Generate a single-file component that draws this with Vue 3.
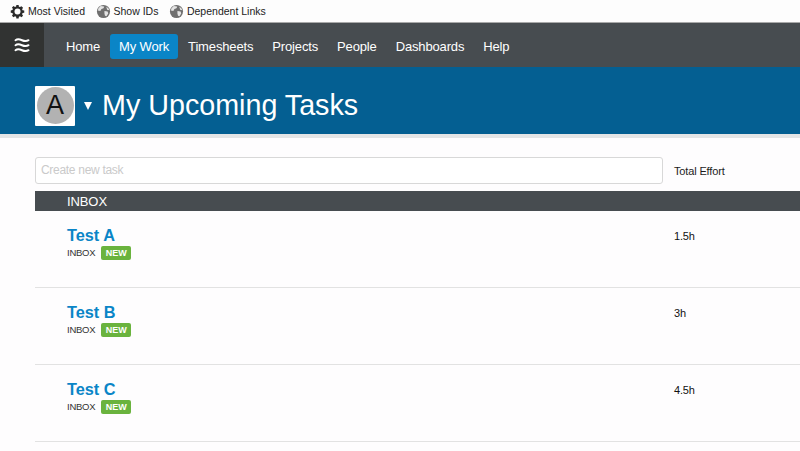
<script setup>
const links = [
  { label: 'Most Visited', icon: 'gear' },
  { label: 'Show IDs', icon: 'globe' },
  { label: 'Dependent Links', icon: 'globe' },
]
const nav = ['Home', 'My Work', 'Timesheets', 'Projects', 'People', 'Dashboards', 'Help']
const tasks = [
  { name: 'Test A', effort: '1.5h' },
  { name: 'Test B', effort: '3h' },
  { name: 'Test C', effort: '4.5h' },
]
</script>

<template>
  <div class="page">
    <div class="bookmarks">
      <div v-for="l in links" :key="l.label" class="bookmark">
        <svg v-if="l.icon === 'gear'" class="bm-icon" viewBox="0 0 16 16">
          <path fill="#2b2b2b" d="M6.8 1h2.4l.3 1.8 1.2.5 1.5-1 1.7 1.7-1 1.5.5 1.2 1.8.3v2.4l-1.8.3-.5 1.2 1 1.5-1.7 1.7-1.5-1-1.2.5-.3 1.8H6.8l-.3-1.8-1.2-.5-1.5 1-1.7-1.7 1-1.5-.5-1.2L.8 9.2V6.8l1.8-.3.5-1.2-1-1.5 1.7-1.7 1.5 1 1.2-.5z"/>
          <circle cx="8" cy="8" r="3.2" fill="#fdfdfd"/>
        </svg>
        <svg v-else class="bm-icon" viewBox="0 0 16 16">
          <circle cx="8" cy="8" r="7" fill="#6f6f6f"/>
          <path fill="#e4e4e4" d="M5 2.2 8.8 2.6 8 4.6 5.8 5.2 4.6 7.4 2 7 2.6 4.6zM9 7.4l3.4.6.6 2-1.8 3-1.6-.4-.6-2.6zM11 2.6l2.6 2.4.6 1.6-2.4-.6z"/>
        </svg>
        <span>{{ l.label }}</span>
      </div>
    </div>

    <header class="nav">
      <div class="logo">
        <svg viewBox="0 0 16 16" class="logo-svg" fill="none" stroke="#fff" stroke-width="2" stroke-linecap="round">
          <path d="M1.5 3.2c2-1.4 3.5-1.2 6.5 0s4.500 1.200 6.500 0"/>
          <path d="M1.500 8.200c2-1.400 3.500-1.200 6.500 0s4.500 1.200 6.500 0"/>
          <path d="M1.500 13.200c2-1.400 3.500-1.200 6.500 0s4.500 1.200 6.500 0"/>
        </svg>
      </div>
      <nav class="menu">
        <a v-for="n in nav" :key="n" class="menu-item" :class="{ active: n === 'My Work' }">{{ n }}</a>
      </nav>
    </header>

    <section class="title-bar">
      <div class="avatar-box">
        <div class="avatar">A</div>
      </div>
      <span class="caret"></span>
      <h1>My Upcoming Tasks</h1>
    </section>
    <div class="title-shadow"></div>

    <main class="content">
      <div class="create-row">
        <div class="create-input">Create new task</div>
        <div class="effort-head">Total Effort</div>
      </div>
      <div class="group">INBOX</div>
      <div v-for="t in tasks" :key="t.name" class="task">
        <div class="task-main">
          <div class="task-name">{{ t.name }}</div>
          <div class="task-meta">
            <span class="task-list">INBOX</span>
            <span class="badge">NEW</span>
          </div>
        </div>
        <div class="task-effort">{{ t.effort }}</div>
      </div>
    </main>
  </div>
</template>

<style>
html, body { margin: 0; background: #fefdfe; overflow: hidden; }
</style>

<style scoped>
.page {
  width: 800px;
  height: 451px;
  overflow: hidden;
  font-family: "Liberation Sans", Arial, sans-serif;
  background: #fefdfe;
}
.bookmarks {
  height: 22px;
  display: flex;
  align-items: center;
  gap: 10.5px;
  padding-left: 10px;
  background: #fdfdfd;
  border-bottom: 1px solid #a9a9a9;
  font-size: 10.5px;
  color: #222;
}
.bookmark { display: flex; align-items: center; gap: 3px; }
.bm-icon { width: 15px; height: 15px; display: block; }
.nav {
  height: 44px;
  display: flex;
  background: #474c50;
}
.logo {
  width: 44px;
  background: #313332;
  display: flex;
  align-items: center;
  justify-content: center;
}
.logo-svg { width: 16px; height: 16px; margin-bottom: 1px; }
.menu {
  display: flex;
  align-items: center;
  gap: 1px;
  padding-left: 13px;
}
.menu-item {
  color: #fff;
  font-size: 13px;
  letter-spacing: -0.15px;
  padding: 0 9px;
  height: 25px;
  line-height: 25px;
  border-radius: 3px;
  margin-top: 3px;
  white-space: nowrap;
}
.menu-item.active { background: #0a85c7; }
.title-bar {
  height: 67px;
  background: #045f92;
  display: flex;
  align-items: center;
  padding: 10px 0 0 35px;
  box-sizing: border-box;
}
.avatar-box {
  width: 40px;
  height: 40px;
  background: #fff;
  display: flex;
  align-items: center;
  justify-content: center;
  border-radius: 1px;
}
.avatar {
  width: 37px;
  height: 37px;
  border-radius: 50%;
  background: #b2b2b2;
  color: #111;
  font-size: 27px;
  line-height: 37px;
  text-align: center;
}
.caret {
  width: 0;
  height: 0;
  margin-left: 9px;
  border-left: 4.500px solid transparent;
  border-right: 4.500px solid transparent;
  border-top: 8px solid #fff;
}
h1 {
  margin: 0 0 0 10px;
  font-size: 28.7px;
  font-weight: 400;
  color: #fff;
  white-space: nowrap;
}
.title-shadow { height: 4px; background: #e3e5e6; }
.content { padding: 0 0 0 35px; }
.create-row {
  display: flex;
  align-items: center;
  margin-top: 19px;
}
.create-input {
  width: 628px;
  height: 27px;
  box-sizing: border-box;
  border: 1px solid #d8d8d8;
  border-radius: 3px;
  background: #fff;
  padding-left: 5px;
  font-size: 12px;
  letter-spacing: -0.3px;
  line-height: 25px;
  color: #cacaca;
}
.effort-head {
  margin-left: 11px;
  font-size: 11px;
  letter-spacing: -0.15px;
  color: #1c1c1c;
  margin-top: 1px;
}
.group {
  margin-top: 7px;
  height: 20px;
  line-height: 21px;
  padding-left: 32px;
  background: #474c50;
  color: #fff;
  font-size: 13px;
  letter-spacing: -0.1px;
}
.task {
  height: 77px;
  box-sizing: border-box;
  border-bottom: 1px solid #e2e2e2;
  display: flex;
  padding-top: 15px;
}
.task-main { width: 639px; padding-left: 32px; box-sizing: border-box; }
.task-name {
  font-size: 16.3px;
  font-weight: 700;
  line-height: 18px;
  color: #0a85c7;
}
.task-meta {
  display: flex;
  align-items: center;
  gap: 6px;
  margin-top: 2px;
  font-size: 9.5px;
  letter-spacing: -0.25px;
  color: #333;
}
.task-list { margin-top: -1px; }
.badge {
  background: #6ab33e;
  color: #fff;
  font-size: 9px;
  font-weight: 700;
  letter-spacing: 0;
  padding: 0 4.5px;
  height: 14px;
  line-height: 14px;
  border-radius: 2px;
}
.task-effort {
  font-size: 11px;
  letter-spacing: -0.15px;
  color: #111;
  margin-top: 3px;
  line-height: 14px;
}
</style>
